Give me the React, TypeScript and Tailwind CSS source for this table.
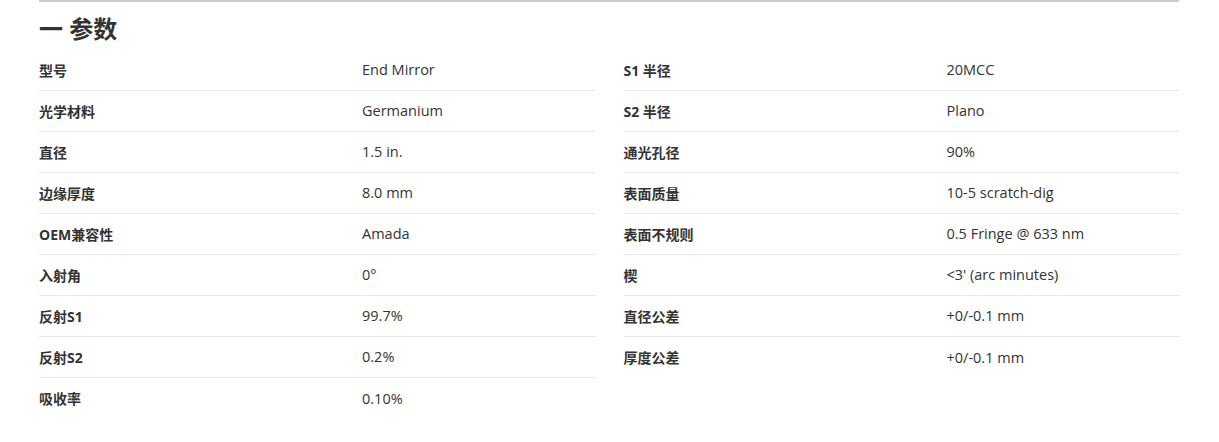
import React from "react";

const left: [string, string][] = [
  ["型号", "End Mirror"],
  ["光学材料", "Germanium"],
  ["直径", "1.5 in."],
  ["边缘厚度", "8.0 mm"],
  ["OEM兼容性", "Amada"],
  ["入射角", "0°"],
  ["反射S1", "99.7%"],
  ["反射S2", "0.2%"],
  ["吸收率", "0.10%"],
];

const right: [string, string][] = [
  ["S1 半径", "20MCC"],
  ["S2 半径", "Plano"],
  ["通光孔径", "90%"],
  ["表面质量", "10-5 scratch-dig"],
  ["表面不规则", "0.5 Fringe @ 633 nm"],
  ["楔", "<3' (arc minutes)"],
  ["直径公差", "+0/-0.1 mm"],
  ["厚度公差", "+0/-0.1 mm"],
];

function Table({ rows }: { rows: [string, string][] }) {
  return (
    <div className="flex flex-col">
      {rows.map(([k, v], i) => (
        <div
          key={k}
          className={
            "grid grid-cols-[323px_1fr] h-[41px] items-center " +
            (i < rows.length - 1 ? "border-b border-[#e8e8e8]" : "")
          }
        >
          <div className="font-bold text-[14px] text-[#333]">{k}</div>
          <div className="text-[14.5px] text-[#333]">{v}</div>
        </div>
      ))}
    </div>
  );
}

export default function App() {
  return (
    <div
      className="bg-white w-[1219px] h-[442px]"
      style={{ fontFamily: '"Open Sans", "Noto Sans CJK SC", sans-serif' }}
    >
      <div className="ml-[39px] w-[1140px] border-t-2 border-[#cccccc]">
        <h2 className="pt-[11px] text-[24px] leading-[32px] font-bold text-[#333] mb-[5px]">
          一 参数
        </h2>
        <div className="grid grid-cols-2 gap-x-[29px] items-start">
          <Table rows={left} />
          <Table rows={right} />
        </div>
      </div>
    </div>
  );
}
